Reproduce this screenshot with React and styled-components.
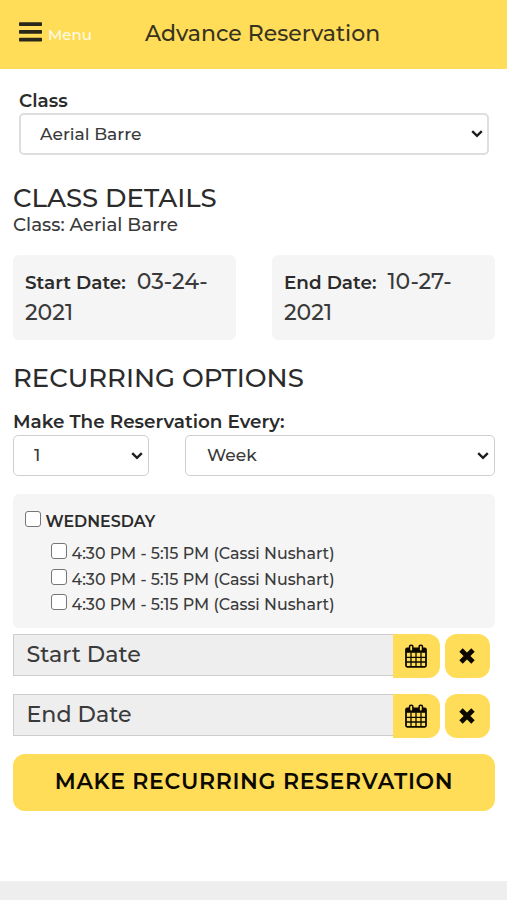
import React from "react";
import styled, { createGlobalStyle } from "styled-components";

const GlobalStyle = createGlobalStyle`
  * { box-sizing: border-box; }
  body {
    margin: 0;
    background: #fff;
    color: #2b2b2b;
    font-family: Montserrat, Inter, "Liberation Sans", sans-serif;
    font-weight: 500;
  }
  h1, h2, p { margin: 0; }
`;

const Page = styled.div`
  display: flex;
  flex-direction: column;
  height: 900px;
  overflow: hidden;
`;

const Header = styled.header`
  flex: none;
  display: flex;
  align-items: center;
  height: 69px;
  padding-left: 19px;
  background: #ffdd59;
`;

const MenuButton = styled.button`
  display: flex;
  align-items: center;
  gap: 6px;
  width: 126px;
  margin-top: -5px;
  padding: 0;
  border: 0;
  background: none;
  color: #fffbe6;
  font: 500 15px/20px Montserrat, Inter, sans-serif;

  svg { flex: none; }
  span { margin-top: 6px; }
`;

const Title = styled.h1`
  margin-top: -2px;
  color: #38331f;
  font-size: 22px;
  line-height: 28px;
  font-weight: 500;
  white-space: nowrap;
`;

const Content = styled.main`
  flex: 1;
  display: flex;
  flex-direction: column;
  padding: 0 12px 0 13px;
`;

const Label = styled.label`
  font-size: 18.4px;
  line-height: 24px;
  font-weight: 600;
  white-space: nowrap;
`;

const ClassField = styled.div`
  display: flex;
  flex-direction: column;
  padding: 20px 6px 0;
`;

const RecurrenceField = styled.div`
  display: flex;
  flex-direction: column;
  padding-top: 17px;
`;

const SelectBox = styled.div`
  display: grid;
  align-items: center;
  height: ${(p) => p.$height}px;

  > * { grid-area: 1 / 1; }
  svg {
    justify-self: end;
    margin-right: 6px;
    pointer-events: none;
  }
`;

const Select = styled.select`
  appearance: none;
  width: 100%;
  height: 100%;
  padding: 0 24px 1px ${(p) => p.$inset}px;
  border: ${(p) => p.$border};
  border-radius: 5px;
  background: #fff;
  color: #3a3a3a;
  font: 500 17.1px/24px Montserrat, Inter, sans-serif;
`;

const SectionTitle = styled.h2`
  margin-top: ${(p) => p.$top}px;
  font-size: 25.95px;
  line-height: 30px;
  font-weight: 500;
  white-space: nowrap;
`;

const ClassName = styled.p`
  color: #3a3a3a;
  font-size: 18.3px;
  line-height: 24px;
`;

const DateCards = styled.div`
  display: grid;
  grid-template-columns: 223px 223px;
  justify-content: space-between;
  margin-top: 18px;
`;

const DateCard = styled.div`
  height: 85px;
  padding: 12px 12px 0;
  border-radius: 6px;
  background: #f5f5f5;
  color: #3a3a3a;
  font-size: 22px;
  line-height: 30px;

  strong {
    margin-right: 11px;
    color: #2b2b2b;
    font-size: 18.4px;
    font-weight: 600;
  }
`;

const Frequency = styled.div`
  display: grid;
  grid-template-columns: 136px 310px;
  justify-content: space-between;
  margin-top: 1px;
`;

const Schedule = styled.section`
  display: flex;
  flex-direction: column;
  height: 134px;
  margin-top: 18px;
  padding: 14px 12px 0;
  border-radius: 6px;
  background: #f5f5f5;
`;

const Check = styled.input.attrs({ type: "checkbox" })`
  appearance: none;
  flex: none;
  width: 16px;
  height: 16px;
  margin: 3px 4.5px 0 0;
  border: 1px solid #767676;
  border-radius: 3px;
  background: #fff;
`;

const Day = styled.label`
  display: flex;
  height: 31px;
  font-size: 15.9px;
  line-height: 28px;
  font-weight: 600;
`;

const Slot = styled.label`
  display: flex;
  height: 25.7px;
  padding-left: 26px;
  color: #3a3a3a;
  font-size: 15.87px;
  line-height: 29px;
  white-space: nowrap;

  ${Check} { margin-top: 4px; }
`;

const DateRow = styled.div`
  display: flex;
  height: 44px;
  margin-top: ${(p) => p.$top}px;
  padding-right: 5px;
`;

const DateInput = styled.div`
  flex: 1;
  height: 42px;
  padding-left: 12.5px;
  border: 1px solid #cdcdcd;
  border-right: 0;
  background: #eee;
  color: #3a3a3a;
  font-size: 22.2px;
  line-height: 39px;
`;

const IconButton = styled.button`
  display: flex;
  align-items: center;
  justify-content: center;
  width: ${(p) => (p.$attached ? 46.5 : 45.5)}px;
  margin-left: ${(p) => (p.$attached ? 0 : 5)}px;
  padding: 0;
  border: 0;
  border-radius: ${(p) => (p.$attached ? "0 12px 12px 0" : "12px")};
  background: #ffdd59;
  color: #0c0a00;
`;

const Submit = styled.button`
  height: 57px;
  margin-top: 16px;
  padding: 0 0 1px;
  border: 0;
  border-radius: 12px;
  background: #ffdd59;
  color: #0c0a00;
  font: 600 22px/28px Montserrat, Inter, sans-serif;
  letter-spacing: 0.66px;
  white-space: nowrap;
`;

const Footer = styled.footer`
  flex: none;
  height: 19px;
  background: #eee;
`;

const BarsIcon = () => (
  <svg width="23" height="20" viewBox="0 0 23 20" fill="#29261a">
    <rect y="0.2" width="23" height="3.8" rx="0.8" />
    <rect y="8" width="23" height="3.8" rx="0.8" />
    <rect y="15.8" width="23" height="3.8" rx="0.8" />
  </svg>
);

const Chevron = () => (
  <svg width="12" height="8" viewBox="0 0 12 8" fill="none" stroke="#1e1e1e" strokeWidth="2.4">
    <path d="M1.2 1.2 L6 5.8 L10.8 1.2" />
  </svg>
);

const CalendarIcon = () => (
  <svg width="22" height="24" viewBox="0 0 22 24">
    <rect x="1" y="4.5" width="20" height="18.3" rx="1.2" fill="none" stroke="currentColor" strokeWidth="1.8" />
    <rect x="1" y="4" width="20" height="4.8" fill="currentColor" />
    <path d="M6 8.5V22.5M11 8.5V22.5M16 8.5V22.5M1 13.4H21M1 18H21" stroke="currentColor" strokeWidth="1.3" />
    <rect x="4.5" y="1.2" width="3.4" height="6" rx="1.5" fill="#ffdd59" stroke="currentColor" strokeWidth="1.5" />
    <rect x="14.1" y="1.2" width="3.4" height="6" rx="1.5" fill="#ffdd59" stroke="currentColor" strokeWidth="1.5" />
  </svg>
);

const ClearIcon = () => (
  <svg width="16" height="16" viewBox="0 0 16 16" fill="none" stroke="currentColor" strokeWidth="4.8">
    <path d="M2 2L14 14M14 2L2 14" />
  </svg>
);

const SelectField = ({ id, value, height = 41, inset = 20, border = "1px solid #cfcfcf" }) => (
  <SelectBox $height={height}>
    <Select id={id} $inset={inset} $border={border} defaultValue={value}>
      <option>{value}</option>
    </Select>
    <Chevron />
  </SelectBox>
);

const DateField = ({ label, top }) => (
  <DateRow $top={top}>
    <DateInput>{label}</DateInput>
    <IconButton $attached aria-label={`Choose ${label}`}>
      <CalendarIcon />
    </IconButton>
    <IconButton aria-label={`Clear ${label}`}>
      <ClearIcon />
    </IconButton>
  </DateRow>
);

const slots = Array(3).fill("4:30 PM - 5:15 PM (Cassi Nushart)");

export default function App() {
  return (
    <Page>
      <GlobalStyle />
      <Header>
        <MenuButton>
          <BarsIcon />
          <span>Menu</span>
        </MenuButton>
        <Title>Advance Reservation</Title>
      </Header>
      <Content>
        <ClassField>
          <Label htmlFor="class">Class</Label>
          <SelectField id="class" value="Aerial Barre" height={42} inset={19} border="2px solid #dedede" />
        </ClassField>

        <SectionTitle $top={28}>CLASS DETAILS</SectionTitle>
        <ClassName>Class: Aerial Barre</ClassName>
        <DateCards>
          <DateCard>
            <strong>Start Date:</strong>
            <span>03-24-</span>
            <div>2021</div>
          </DateCard>
          <DateCard>
            <strong>End Date:</strong>
            <span>10-27-</span>
            <div>2021</div>
          </DateCard>
        </DateCards>

        <SectionTitle $top={23}>RECURRING OPTIONS</SectionTitle>
        <RecurrenceField>
          <Label htmlFor="count">Make The Reservation Every:</Label>
          <Frequency>
            <SelectField id="count" value="1" />
            <SelectField id="unit" value="Week" inset={21} />
          </Frequency>
        </RecurrenceField>

        <Schedule>
          <Day>
            <Check />
            WEDNESDAY
          </Day>
          {slots.map((slot, i) => (
            <Slot key={i}>
              <Check />
              {slot}
            </Slot>
          ))}
        </Schedule>

        <DateField label="Start Date" top={6} />
        <DateField label="End Date" top={16} />
        <Submit>MAKE RECURRING RESERVATION</Submit>
      </Content>
      <Footer />
    </Page>
  );
}
